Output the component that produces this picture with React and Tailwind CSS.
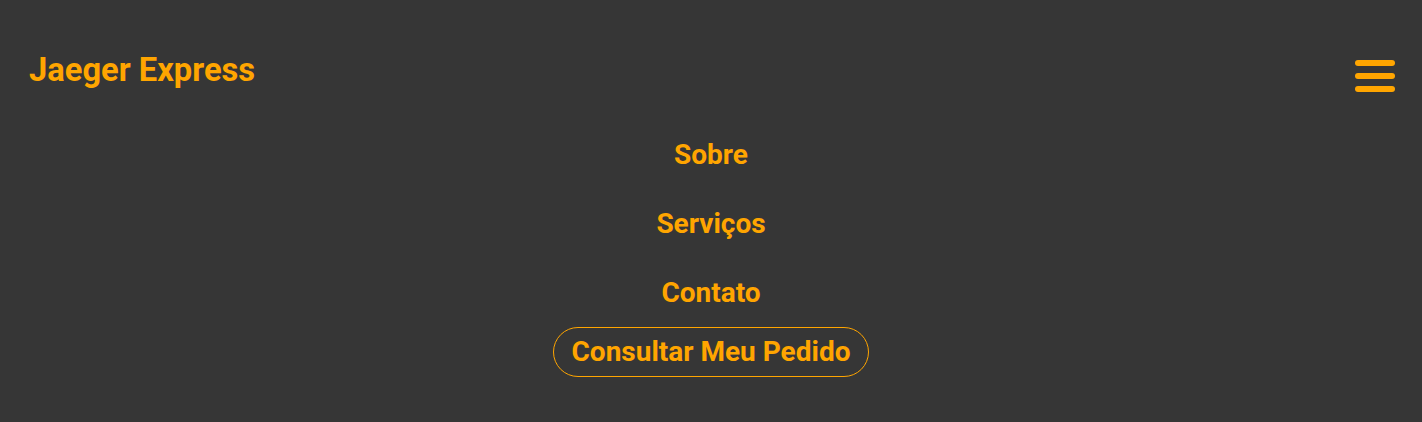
export default function App() {
  return (
    <div className="min-h-[422px] w-full bg-[#363636]" style={{ fontFamily: "Roboto, sans-serif" }}>
      <header className="px-[29px] pt-[48px]">
        <div className="flex items-start justify-between">
          <a className="text-[32.7px] font-bold leading-[44px] text-[#ffa500]">Jaeger Express</a>
          <button className="mt-[12px] mr-[-2px] flex flex-col gap-[7px] p-0">
            <span className="block h-[6px] w-[40px] rounded-[3px] bg-[#ffa500]" />
            <span className="block h-[6px] w-[40px] rounded-[3px] bg-[#ffa500]" />
            <span className="block h-[6px] w-[40px] rounded-[3px] bg-[#ffa500]" />
          </button>
        </div>
        <nav className="mt-[28px] flex flex-col items-center">
          <a className="py-[16px] text-[28px] font-bold leading-[37px] text-[#ffa500]">Sobre</a>
          <a className="py-[16px] text-[28px] font-bold leading-[37px] text-[#ffa500]">Serviços</a>
          <a className="py-[16px] text-[28px] font-bold leading-[37px] text-[#ffa500]">Contato</a>
          <a className="rounded-full border border-[#ffa500] px-[18px] py-[5px] text-[28px] font-bold leading-[38px] text-[#ffa500]">
            Consultar Meu Pedido
          </a>
        </nav>
      </header>
    </div>
  );
}
